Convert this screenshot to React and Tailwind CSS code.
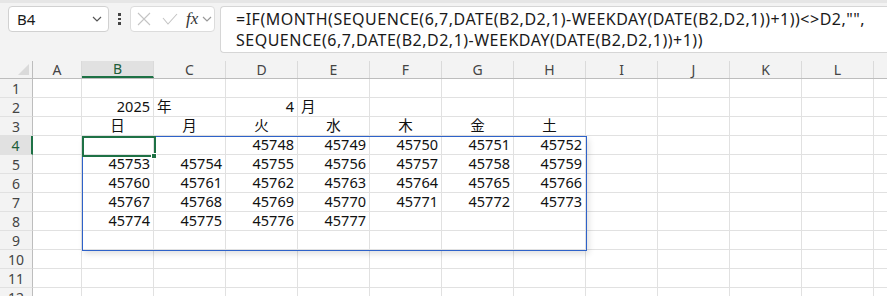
import React from 'react'

const cols = ['A', 'B', 'C', 'D', 'E', 'F', 'G', 'H', 'I', 'J', 'K', 'L', 'M']
const widths = [49, 72, 72, 72, 72, 72, 72, 72, 72, 72, 72, 72, 72]

// row -> { colIndex: [text, align] }
const cells = {
  2: { 1: ['2025', 'r'], 2: ['年', 'l'], 3: ['4', 'r'], 4: ['月', 'l'] },
  3: { 1: ['日', 'c'], 2: ['月', 'c'], 3: ['火', 'c'], 4: ['水', 'c'], 5: ['木', 'c'], 6: ['金', 'c'], 7: ['土', 'c'] },
}

const weeks = [
  [null, null, 45748, 45749, 45750, 45751, 45752],
  [45753, 45754, 45755, 45756, 45757, 45758, 45759],
  [45760, 45761, 45762, 45763, 45764, 45765, 45766],
  [45767, 45768, 45769, 45770, 45771, 45772, 45773],
  [45774, 45775, 45776, 45777, null, null, null],
]
weeks.forEach((w, i) => {
  cells[4 + i] = {}
  w.forEach((v, j) => {
    if (v) cells[4 + i][1 + j] = [String(v), 'r']
  })
})

const font = { fontFamily: '"Noto Sans", "Noto Sans CJK JP", sans-serif' }

function Chevron({ className }) {
  return (
    <svg viewBox="0 0 10 6" className={className} fill="none" stroke="currentColor" strokeWidth="1.2">
      <path d="M1 1l4 4 4-4" />
    </svg>
  )
}

function Toolbar() {
  return (
    <div className="flex h-[61px] items-start border-t-[3px] border-[#e6e6e6] bg-[#f3f3f3] pt-[3px]">
      <div className="ml-[8px] flex h-[26px] w-[101px] items-center justify-between rounded-[4px] border border-[#d1d1d1] bg-white pl-[8px] pr-[6px]">
        <span className="text-[15px] text-[#1a1a1a]">B4</span>
        <Chevron className="h-[6px] w-[10px] text-[#555]" />
      </div>
      <div className="flex h-[26px] w-[21px] flex-col items-center justify-center gap-[2px]">
        <span className="h-[2.5px] w-[2.5px] bg-[#444]" />
        <span className="h-[2.5px] w-[2.5px] bg-[#444]" />
        <span className="h-[2.5px] w-[2.5px] bg-[#444]" />
      </div>
      <div className="flex h-[26px] w-[85px] items-center rounded-[4px] border border-[#dcdcdc] bg-white pl-[6px]">
        <svg viewBox="0 0 14 14" className="h-[14px] w-[14px] text-[#c4c4c4]" fill="none" stroke="currentColor" strokeWidth="1.1">
          <path d="M1 1l12 12M13 1L1 13" />
        </svg>
        <svg viewBox="0 0 16 12" className="ml-[11px] h-[12px] w-[16px] text-[#c4c4c4]" fill="none" stroke="currentColor" strokeWidth="1.1">
          <path d="M1 5l5 6 9-10" />
        </svg>
        <span className="ml-[8px] text-[17px] italic text-[#333]" style={{ fontFamily: '"Liberation Serif", serif' }}>
          fx
        </span>
        <Chevron className="ml-[4px] h-[6px] w-[10px] text-[#999]" />
      </div>
      <div className="ml-[5px] h-[47px] flex-1 rounded-l-[4px] border border-r-0 border-[#d6d6d6] bg-white pl-[15px] pt-[2px] text-[16px] leading-[21px] tracking-[0.5px] text-[#1a1a1a] whitespace-nowrap">
        <div>=IF(MONTH(SEQUENCE(6,7,DATE(B2,D2,1)-WEEKDAY(DATE(B2,D2,1))+1))&lt;&gt;D2,"",</div>
        <div>SEQUENCE(6,7,DATE(B2,D2,1)-WEEKDAY(DATE(B2,D2,1))+1))</div>
      </div>
    </div>
  )
}

function Sheet() {
  const rows = Array.from({ length: 12 }, (_, i) => i + 1)
  return (
    <div className="relative">
      <div className="flex h-[18px] border-b border-[#bdbdbd] bg-[#f3f3f3]">
        <div className="relative w-[33px] shrink-0 border-r border-[#bdbdbd]">
          <div className="absolute bottom-[3px] right-[3px] h-0 w-0 border-b-[11px] border-l-[11px] border-b-[#dadada] border-l-transparent" />
        </div>
        {cols.map((c, i) => (
          <div
            key={c}
            className={
              'flex shrink-0 items-center justify-center border-r border-[#dadada] text-[14px] ' +
              (c === 'B' ? 'border-b-2 border-b-[#1e7145] bg-[#e1e1e1] text-[#1e5e3a]' : 'text-[#444]')
            }
            style={{ width: widths[i] }}
          >
            {c}
          </div>
        ))}
      </div>
      {rows.map((r) => (
        <div key={r} className="flex h-[19px]">
          <div
            className={
              'flex w-[33px] shrink-0 items-center justify-center border-b border-[#e1e1e1] text-[14px] ' +
              (r === 4 ? 'border-r-2 border-r-[#1e7145] bg-[#e1e1e1] text-[#1e5e3a]' : 'border-r border-r-[#bdbdbd] bg-[#f3f3f3] text-[#444]')
            }
          >
            {r}
          </div>
          {cols.map((c, i) => {
            const cell = cells[r] && cells[r][i]
            const align = cell ? cell[1] : 'r'
            return (
              <div
                key={c}
                className={
                  'flex shrink-0 items-center border-b border-r border-[#e1e1e1] bg-white px-[3px] text-[14.5px] text-[#111] ' +
                  (align === 'r' ? 'justify-end' : align === 'c' ? 'justify-center' : 'justify-start')
                }
                style={{ width: widths[i] }}
              >
                {cell ? cell[0] : ''}
              </div>
            )
          })}
        </div>
      ))}
      {/* spill range outline */}
      <div className="pointer-events-none absolute left-[82px] top-[75px] h-[115px] w-[505px] border border-[#2e62c9] shadow-[2px_3px_6px_rgba(0,0,0,0.12)]" />
      {/* active cell */}
      <div className="pointer-events-none absolute left-[82px] top-[75px] h-[21px] w-[74px] border-2 border-[#1e7145]" />
      <div className="pointer-events-none absolute left-[151px] top-[92px] h-[6px] w-[6px] border border-white bg-[#1e7145]" />
    </div>
  )
}

export default function App() {
  return (
    <div className="h-[296px] w-[887px] overflow-hidden bg-white" style={font}>
      <Toolbar />
      <Sheet />
    </div>
  )
}
